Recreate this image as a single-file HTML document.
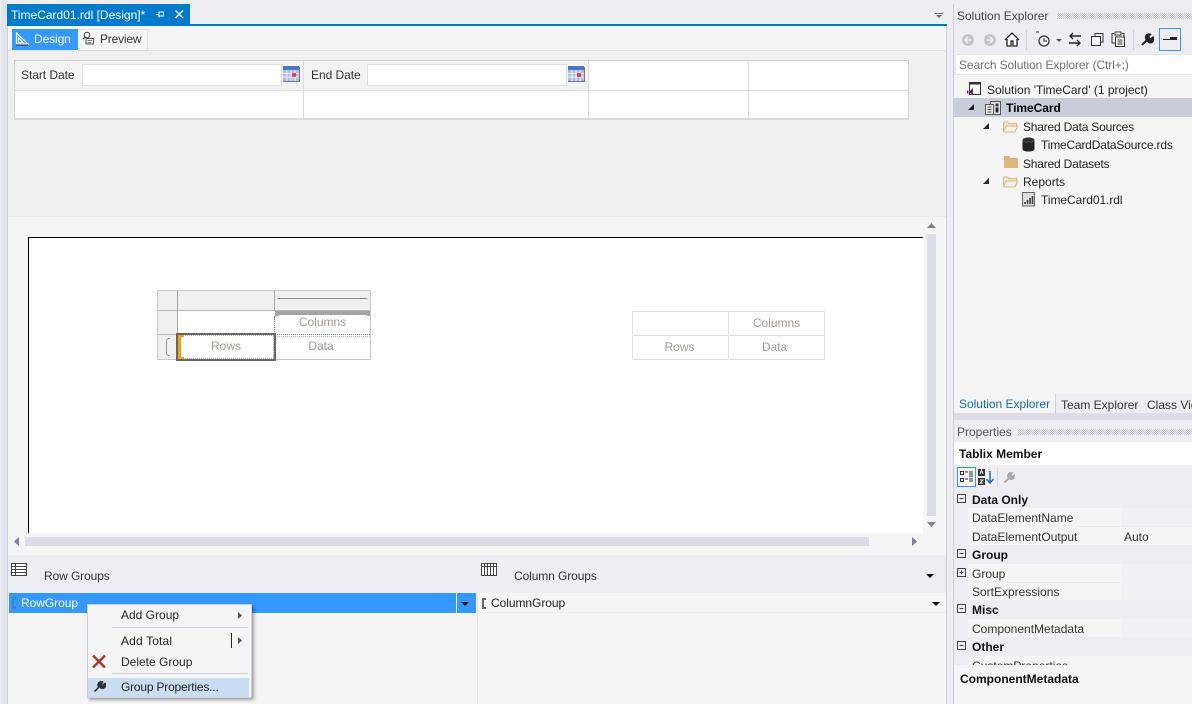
<!DOCTYPE html>
<html><head><meta charset="utf-8"><title>TimeCard</title>
<style>
html,body{margin:0;padding:0}
body{width:1192px;height:704px;overflow:hidden;position:relative;background:#eeeef2;font-family:"Liberation Sans",sans-serif;font-size:12px;color:#1e1e1e}
div,span,svg{position:absolute;box-sizing:border-box}
.t{white-space:nowrap;line-height:16px}
.g{color:#a09a94;text-align:center;white-space:nowrap;line-height:16px}
.b{font-weight:bold;color:#000}
.dots{background-image:conic-gradient(#c2c4d0 25%,transparent 0 50%,#c2c4d0 0 75%,transparent 0);background-size:2px 2px;height:6px}
</style></head><body>
<!-- doc frame -->
<div style="left:1px;top:0;width:6px;height:704px;background:#e3e3ee"></div>
<div style="left:7px;top:25px;width:940px;height:679px;background:#f5f5f5;border-left:1px solid #cccedb;border-right:1px solid #cccedb"></div>
<div style="left:7px;top:0;width:940px;height:25px;background:#eeeef2"></div>
<div style="left:7px;top:4px;width:183px;height:20px;background:#007acc"></div>
<div style="left:7px;top:24px;width:940px;height:2px;background:#007acc"></div>
<div class="t" style="left:11px;top:7px;color:#fff;font-size:12px">TimeCard01.rdl [Design]*</div>
<svg style="left:155px;top:9px" width="11" height="11" viewBox="0 0 11 11"><path d="M1 5.500h3M4 2.500v6M4.500 3h4v4h-4M8.500 2.500v5" stroke="#fff" fill="none"/></svg>
<svg style="left:174px;top:9px" width="11" height="11" viewBox="0 0 11 11"><path d="M1.500 1.500l7.500 7.500M9 1.500l-7.500 7.500" stroke="#fff" stroke-width="1.400" fill="none"/></svg>
<svg style="left:935px;top:13px" width="10" height="6"><path d="M0 0h8v1H0zM1 2h6L4 5z" fill="#6d6d75"/></svg>
<!-- design/preview tabs -->
<div style="left:8px;top:50px;width:938px;height:1px;background:#e2e2e8"></div>
<div style="left:78px;top:29px;width:70px;height:22px;background:#f6f6f6;border:1px solid #e0e0e6;border-left:0;border-bottom:1px solid #d8d8de"></div>
<div style="left:12px;top:29px;width:66px;height:21px;background:#3399ff"></div>
<svg style="left:15px;top:32px" width="14" height="14" viewBox="0 0 14 14"><path d="M1.500 1v11H13zM3.500 6v4.500H8z" fill="none" stroke="#fff" stroke-width="1.200"/><path d="M1 13h12" stroke="#222"/></svg>
<div class="t" style="left:34px;top:31px;color:#fff;letter-spacing:-.1px">Design</div>
<svg style="left:82px;top:31px" width="13" height="14" viewBox="0 0 13 14"><circle cx="5" cy="4" r="2.800" fill="none" stroke="#444"/><path d="M4 7.500h7.500v5.500H4z" fill="#eee" stroke="#555"/><path d="M1 8l2-2" stroke="#444" stroke-width="1.400"/><path d="M5.500 9.500h4.500M5.500 11.500h4" stroke="#777"/></svg>
<div class="t" style="left:100px;top:31px;letter-spacing:-.2px;color:#333">Preview</div>
<!-- parameter pane -->
<div style="left:8px;top:51px;width:938px;height:165px;background:#f0f0f0"></div>
<div style="left:8px;top:216px;width:938px;height:1px;background:#ebebef"></div>
<div style="left:14px;top:60px;width:895px;height:60px;background:#fff;border:1px solid #d2d2d2;border-bottom:2px solid #dcdcdc"></div>
<div style="left:15px;top:61px;width:573px;height:29px;background:#f3f3f3"></div>
<div style="left:15px;top:90px;width:893px;height:1px;background:#dcdcdc"></div>
<div style="left:303px;top:61px;width:1px;height:58px;background:#dcdcdc"></div>
<div style="left:588px;top:61px;width:1px;height:58px;background:#dcdcdc"></div>
<div style="left:748px;top:61px;width:1px;height:58px;background:#dcdcdc"></div>
<div class="t" style="left:21px;top:67px;color:#333;letter-spacing:-.05px">Start Date</div>
<div style="left:82px;top:64px;width:200px;height:22px;background:#fff;border:1px solid #e0e0e0"></div>
<div class="t" style="left:311px;top:67px;color:#333;letter-spacing:-.05px">End Date</div>
<div style="left:367px;top:64px;width:200px;height:22px;background:#fff;border:1px solid #e0e0e0"></div>
<svg style="left:283px;top:66px" width="17" height="16" viewBox="0 0 17 16"><rect width="16" height="15" fill="#a9bfe8"/><rect width="16" height="4" fill="#4a76c8"/><path d="M0 7.500h16M0 11h16M4 4v11M8 4v11M12 4v11" stroke="#fff" stroke-width=".8"/><rect x="9" y="7" width="4" height="4" fill="#f04050"/><path d="M16.500 1v14.500H0" stroke="#777" fill="none"/></svg>
<svg style="left:568px;top:66px" width="17" height="16" viewBox="0 0 17 16"><rect width="16" height="15" fill="#a9bfe8"/><rect width="16" height="4" fill="#4a76c8"/><path d="M0 7.500h16M0 11h16M4 4v11M8 4v11M12 4v11" stroke="#fff" stroke-width=".8"/><rect x="9" y="7" width="4" height="4" fill="#f04050"/><path d="M16.500 1v14.500H0" stroke="#777" fill="none"/></svg>
<!-- report surface -->
<div style="left:28px;top:237px;width:895px;height:296px;background:#fff;border-left:1px solid #000;border-top:1px solid #000"></div>
<!-- scrollbars -->
<div style="left:927px;top:234px;width:9px;height:282px;background:#dcdce6"></div>
<svg style="left:927px;top:223px" width="9" height="6"><path d="M4.500 0L9 5H0z" fill="#7c7f96"/></svg>
<svg style="left:927px;top:522px" width="9" height="6"><path d="M0 0h9L4.500 5z" fill="#7c7f96"/></svg>
<div style="left:25px;top:537px;width:844px;height:9px;background:#dcdce6"></div>
<svg style="left:912px;top:537px" width="6" height="9"><path d="M0 0l5 4.500L0 9z" fill="#7c7f96"/></svg>
<svg style="left:14px;top:537px" width="6" height="9"><path d="M5 0L0 4.500 5 9z" fill="#7c7f96"/></svg>
<!-- left tablix -->
<div style="left:157px;top:290px;width:214px;height:70px;background:#fff;border:1px solid #c8c8c8"></div>
<div style="left:158px;top:291px;width:212px;height:19px;background:#f0f0f0"></div>
<div style="left:158px;top:310px;width:19px;height:49px;background:#f0f0f0"></div>
<div style="left:158px;top:310px;width:212px;height:1px;background:#b4b4b4"></div>
<div style="left:177px;top:291px;width:1px;height:68px;background:#a8a8a8"></div>
<div style="left:274px;top:291px;width:1px;height:19px;background:#a8a8a8"></div>
<div style="left:158px;top:334px;width:19px;height:1px;background:#b4b4b4"></div>
<div style="left:277px;top:298px;width:91px;height:2px;border-top:1px solid #8f8f8f;border-radius:2px 2px 0 0"></div>
<div style="left:275px;top:311px;width:95px;height:5px;background:#a4a4a4"></div>
<div style="left:279px;top:315px;width:88px;height:2px;background:#fff"></div>
<div style="left:274px;top:316px;width:0;height:18px;border-left:1px dotted #777"></div>
<div style="left:275px;top:334px;width:95px;height:0;border-top:1px dotted #777"></div>
<div style="left:275px;top:336px;width:95px;height:0;border-top:1px dotted #bbb"></div>
<div class="g" style="left:275px;top:314px;width:95px">Columns</div>
<div class="g" style="left:275px;top:338px;width:92px;color:#999">Data</div>
<div style="left:176px;top:333px;width:100px;height:28px;border:2px solid #666"></div>
<div style="left:178px;top:335px;width:96px;height:24px;border:1px dotted #aaa;border-left:0"></div>
<div style="left:178px;top:335px;width:6px;height:24px;background:#f0a30a"></div>
<div style="left:181px;top:337px;width:3px;height:20px;background:#fff"></div>
<div class="g" style="left:178px;top:338px;width:96px">Rows</div>
<div style="left:166px;top:338px;width:4px;height:18px;border:1px solid #999;border-right:0;border-radius:3px 0 0 3px"></div>
<!-- right tablix -->
<div style="left:632px;top:311px;width:193px;height:49px;background:#fff;border:1px solid #e0e0e0"></div>
<div style="left:633px;top:335px;width:191px;height:1px;background:#e0e0e0"></div>
<div style="left:728px;top:312px;width:1px;height:47px;background:#e0e0e0"></div>
<div class="g" style="left:729px;top:315px;width:95px">Columns</div>
<div class="g" style="left:632px;top:339px;width:95px">Rows</div>
<div class="g" style="left:727px;top:339px;width:95px;color:#999">Data</div>
<!-- groups -->
<div style="left:8px;top:555px;width:938px;height:38px;background:#eeeef2"></div>
<svg style="left:11px;top:563px" width="16" height="13" viewBox="0 0 16 13"><rect x=".5" y=".5" width="15" height="12" fill="#fff" stroke="#444"/><path d="M0 3.500h16M0 6.500h16M0 9.500h16M4.500 0v13" stroke="#444"/></svg>
<div class="t" style="left:44px;top:568px;color:#333;letter-spacing:-.1px">Row Groups</div>
<svg style="left:481px;top:563px" width="16" height="13" viewBox="0 0 16 13"><rect x=".5" y=".5" width="15" height="12" fill="#fff" stroke="#444"/><path d="M0 3.500h16M3.500 0v13M6.500 0v13M9.500 0v13M12.500 0v13" stroke="#444"/></svg>
<div class="t" style="left:514px;top:568px;color:#333;letter-spacing:-.1px">Column Groups</div>
<svg style="left:926px;top:574px" width="9" height="5"><path d="M0 0h8L4 4z" fill="#111"/></svg>
<div style="left:9px;top:593px;width:467px;height:20px;background:#3399ff"></div>
<div style="left:456px;top:593px;width:1px;height:20px;background:#f5f5f5"></div>
<svg style="left:461px;top:602px" width="9" height="5"><path d="M0 0h8L4 4z" fill="#111"/></svg>
<div style="left:12px;top:597px;width:4px;height:12px;border:2px solid #4d80bd;border-right:0"></div>
<div class="t" style="left:21px;top:595px;color:#fff;letter-spacing:-.05px">RowGroup</div>
<div style="left:477px;top:593px;width:1px;height:111px;background:#e8e8ec"></div>
<div style="left:478px;top:593px;width:468px;height:20px;background:#f5f5f5;border-bottom:1px solid #ececf0"></div>
<div style="left:482px;top:598px;width:4px;height:11px;border:2px solid #666;border-right:0"></div>
<div class="t" style="left:491px;top:595px;color:#222;letter-spacing:-.05px">ColumnGroup</div>
<svg style="left:932px;top:602px" width="9" height="5"><path d="M0 0h8L4 4z" fill="#111"/></svg>
<!-- context menu -->
<div style="left:87px;top:604px;width:165px;height:94px;background:#f5f5f5;border:1px solid #cccedb;box-shadow:2px 2px 3px rgba(0,0,0,.35)"></div>
<div class="t" style="left:121px;top:607px;color:#222">Add Group</div>
<svg style="left:238px;top:612px" width="5" height="7"><path d="M0 0l4 3.500L0 7z" fill="#555"/></svg>
<div style="left:112px;top:627px;width:136px;height:1px;background:#cccedb"></div>
<div class="t" style="left:121px;top:633px;color:#222;letter-spacing:.15px">Add Total</div>
<div style="left:231px;top:633px;width:1px;height:15px;background:#222"></div>
<svg style="left:238px;top:637px" width="5" height="7"><path d="M0 0l4 3.500L0 7z" fill="#555"/></svg>
<svg style="left:92px;top:655px" width="14" height="13" viewBox="0 0 14 13"><path d="M1 .5l12 12M13 .5l-12 12" stroke="#a8392c" stroke-width="2.400" fill="none"/></svg>
<div class="t" style="left:121px;top:654px;color:#222">Delete Group</div>
<div style="left:112px;top:673px;width:136px;height:1px;background:#cccedb"></div>
<div style="left:88px;top:678px;width:161px;height:19px;background:#c9def5"></div>
<svg style="left:93px;top:680px" width="13" height="13" viewBox="0 0 13 13"><path d="M1.500 11.500L6 7M6 7a3 3 0 0 1 3-5l1-.5-2 2.500 1.500 1.500 2.500-2a3 3 0 0 1-5 3.500" fill="#333" stroke="#333" stroke-width="1.600"/></svg>
<div class="t" style="left:121px;top:679px;color:#222;letter-spacing:-.2px">Group Properties...</div>
<!-- solution explorer -->
<div style="left:953px;top:4px;width:239px;height:700px;background:#eeeef2;border-left:1px solid #cccedb"></div>
<div class="t" style="left:957px;top:8px;color:#444">Solution Explorer</div>
<div class="dots" style="left:1057px;top:13px;width:135px"></div>
<svg style="left:961px;top:33px" width="46" height="14"><circle cx="7" cy="7" r="6" fill="#c6c6cc"/><path d="M10 7H4M7 4L4 7l3 3" stroke="#eeeef2" fill="none" stroke-width="1.500"/><circle cx="29" cy="7" r="6" fill="#c6c6cc"/><path d="M26 7h6M29 4l3 3-3 3" stroke="#eeeef2" fill="none" stroke-width="1.500"/></svg>
<svg style="left:1004px;top:32px" width="16" height="15" viewBox="0 0 16 15"><path d="M1 8l7-7 7 7M3 7v7h4V9h2v5h4V7" fill="#fff" stroke="#222" stroke-width="1.300"/></svg>
<div style="left:1026px;top:30px;width:1px;height:20px;background:#d4d4da"></div>
<svg style="left:1036px;top:31px" width="26" height="17" viewBox="0 0 26 17"><circle cx="8" cy="10" r="5" fill="none" stroke="#333" stroke-width="1.300"/><path d="M8 7v3h3M0 1h3" stroke="#333" fill="none"/><path d="M20 8h6l-3 3z" fill="#555"/></svg>
<svg style="left:1068px;top:32px" width="14" height="15" viewBox="0 0 14 15"><path d="M13 4H2M5 1L2 4l3 3M1 11h11M9 8l3 3-3 3" stroke="#222" stroke-width="1.400" fill="none"/></svg>
<svg style="left:1091px;top:33px" width="13" height="13" viewBox="0 0 13 13"><path d="M4 3V.5h8V9H9.500" fill="none" stroke="#333"/><rect x=".5" y="3.500" width="9" height="9" fill="#fff" stroke="#333"/></svg>
<svg style="left:1111px;top:31px" width="15" height="16" viewBox="0 0 15 16"><path d="M3 2.500H1V12h3" fill="none" stroke="#333"/><path d="M11 2.500h2V6" fill="none" stroke="#333"/><rect x="4" y="1" width="6" height="3" fill="#fff" stroke="#333"/><rect x="4.500" y="6" width="9" height="9.500" fill="#fff" stroke="#333"/><path d="M6.500 9h5M6.500 11h5M6.500 13h5" stroke="#333"/></svg>
<div style="left:1133px;top:30px;width:1px;height:20px;background:#d4d4da"></div>
<svg style="left:1140px;top:33px" width="14" height="14" viewBox="0 0 14 14"><path d="M2 12L7 7M7 7a3.200 3.200 0 0 1 3-5.500l-2 2.500 2.500 2.500 2.500-2A3.200 3.200 0 0 1 7.500 8" fill="#222" stroke="#222" stroke-width="2"/></svg>
<div style="left:1159px;top:28px;width:22px;height:23px;border:1px solid #3399ff;background:#eeeef2"></div>
<div style="left:1163px;top:39px;width:14px;height:1px;background:#222"></div>
<div style="left:1170px;top:37px;width:7px;height:3px;background:#222"></div>
<div style="left:955px;top:54px;width:237px;height:21px;background:#fff;border:1px solid #e4e4ea;border-right:0"></div>
<div class="t" style="left:959px;top:57px;color:#707070;letter-spacing:-.1px">Search Solution Explorer (Ctrl+;)</div>
<!-- tree -->
<div style="left:954px;top:75px;width:238px;height:319px;background:#f5f5f5"></div>
<div style="left:954px;top:98px;width:238px;height:19px;background:#c9ccd9"></div>
<svg style="left:967px;top:82px" width="14" height="14" viewBox="0 0 14 14"><rect x="2.500" y=".5" width="11" height="12" fill="#fff" stroke="#333"/><rect x="2" y="0" width="12" height="2.500" fill="#333"/><path d="M0 8l2 2 4-4v7l-4-3-2 2z" fill="#68217a"/></svg>
<div class="t" style="left:987px;top:82px;color:#222">Solution 'TimeCard' (1 project)</div>
<svg style="left:968px;top:104px" width="7" height="7"><path d="M6 0v6H0z" fill="#222"/></svg>
<svg style="left:985px;top:100px" width="16" height="16" viewBox="0 0 16 16"><rect x="5.500" y="1.500" width="10" height="13" fill="#ddd" stroke="#555"/><rect x=".5" y="4.500" width="8" height="10" fill="#eee" stroke="#555"/><path d="M2.500 7h4M2.500 9.500h4M2.500 12h4M11 4h2v2h-2zM11 8h2v4h-2z" stroke="#444"/></svg>
<div class="t b" style="left:1006px;top:100px;letter-spacing:-.05px">TimeCard</div>
<svg style="left:983px;top:123px" width="7" height="7"><path d="M6 0v6H0z" fill="#222"/></svg>
<svg style="left:1003px;top:120px" width="15" height="13" viewBox="0 0 15 13"><path d="M.5 12V2h4l1 1.500h8V6" fill="#f4e8d0" stroke="#dcb67a"/><path d="M.5 12L3 6h11.500L12 12z" fill="#f5f5f5" stroke="#dcb67a"/></svg>
<div class="t" style="left:1023px;top:119px;color:#222;letter-spacing:-.2px">Shared Data Sources</div>
<svg style="left:1022px;top:137px" width="13" height="15" viewBox="0 0 13 15"><ellipse cx="6.500" cy="3" rx="6" ry="2.500" fill="#333"/><path d="M.5 3v9c0 1.500 2.500 2.500 6 2.500s6-1 6-2.500V3c0 1.500-2.500 2.500-6 2.500S.5 4.500.5 3z" fill="#222"/></svg>
<div class="t" style="left:1041px;top:137px;color:#222;letter-spacing:-.18px">TimeCardDataSource.rds</div>
<svg style="left:1004px;top:156px" width="14" height="12" viewBox="0 0 14 12"><path d="M0 12V0h5l1.500 2H14v10z" fill="#dcb67a"/></svg>
<div class="t" style="left:1023px;top:155.500px;color:#222;letter-spacing:-.2px">Shared Datasets</div>
<svg style="left:983px;top:178px" width="7" height="7"><path d="M6 0v6H0z" fill="#222"/></svg>
<svg style="left:1003px;top:175px" width="15" height="13" viewBox="0 0 15 13"><path d="M.5 12V2h4l1 1.500h8V6" fill="#f4e8d0" stroke="#dcb67a"/><path d="M.5 12L3 6h11.500L12 12z" fill="#f5f5f5" stroke="#dcb67a"/></svg>
<div class="t" style="left:1023px;top:174px;color:#222">Reports</div>
<svg style="left:1022px;top:192px" width="14" height="15" viewBox="0 0 14 15"><rect x=".5" y=".5" width="12" height="13.500" fill="#ddd" stroke="#666"/><path d="M3 12V10M5.500 12V8M8 12V6M10.500 12V4" stroke="#444" stroke-width="1.600"/></svg>
<div class="t" style="left:1041px;top:192px;color:#222;letter-spacing:-.05px">TimeCard01.rdl</div>
<!-- bottom tabs -->
<div style="left:954px;top:394px;width:238px;height:19px;background:#eeeef2"></div>
<div style="left:954px;top:394px;width:102px;height:19px;background:#f5f5f5;border-right:1px solid #cccedb"></div>
<div class="t" style="left:959px;top:396px;color:#0e70c0;letter-spacing:-.02px">Solution Explorer</div>
<div class="t" style="left:1061px;top:397px;color:#333">Team Explorer</div>
<div class="t" style="left:1147px;top:397px;color:#333">Class View</div>
<div style="left:954px;top:413px;width:238px;height:7px;background:#dcdde6"></div>
<!-- properties -->
<div class="t" style="left:957px;top:424px;color:#555">Properties</div>
<div class="dots" style="left:1018px;top:429px;width:174px"></div>
<div style="left:954px;top:442px;width:238px;height:23px;background:#fff"></div>
<div class="t b" style="left:959px;top:446px;color:#111">Tablix Member</div>
<div style="left:957px;top:467px;width:19px;height:20px;border:1px solid #3399ff;background:#f5f5f5"></div>
<svg style="left:960px;top:471px" width="13" height="12" viewBox="0 0 13 12"><path d="M.5.500h3v3h-3zM.5 7.500h3v3h-3z" fill="#fff" stroke="#333"/><path d="M5 1h3M5 8h3M9 1h4M9 3h4M9 5h4M9 8h4M9 10h4" stroke="#333"/></svg>
<svg style="left:978px;top:469px" width="16" height="17" viewBox="0 0 16 17"><rect x="0" y="0" width="7" height="7" fill="#333"/><rect x="0" y="9" width="7" height="7" fill="#333"/><path d="M2 5l1.500-4L5 5M2 11h3l-3 3h3" stroke="#fff" fill="none"/><path d="M12 2v11M8.500 10l3.500 4 3.500-4" stroke="#1c6fb5" fill="none" stroke-width="1.500"/></svg>
<div style="left:997px;top:468px;width:1px;height:19px;background:#d8d8de"></div>
<svg style="left:1003px;top:471px" width="13" height="13" viewBox="0 0 13 13"><path d="M1.500 11.500L6 7a3 3 0 0 1 3-5l-1.500 2L9 6l2-1.500A3 3 0 0 1 7 8" fill="#aaa" stroke="#aaa" stroke-width="1.800"/></svg>
<!-- prop grid -->
<div style="left:968px;top:508px;width:224px;height:157px;background:#f5f5f5"></div>
<div style="left:954px;top:545px;width:238px;height:19px;background:#eeeef2"></div>
<div style="left:954px;top:600px;width:238px;height:19px;background:#eeeef2"></div>
<div style="left:954px;top:637px;width:238px;height:19px;background:#eeeef2"></div>
<div style="left:968px;top:526px;width:224px;height:1px;background:#ececf0"></div>
<div style="left:968px;top:582px;width:224px;height:1px;background:#ececf0"></div>
<div style="left:1121px;top:508px;width:71px;height:18px;background:#f1f1f4"></div>
<div style="left:1121px;top:564px;width:71px;height:18px;background:#f1f1f4"></div>
<div style="left:1121px;top:582px;width:71px;height:18px;background:#f1f1f4"></div>
<div style="left:1121px;top:619px;width:71px;height:18px;background:#f1f1f4"></div>
<svg style="left:956px;top:494px" width="11" height="170"><g fill="none" stroke="#444"><path d="M1.500.5h8v8h-8zM3.500 4.500h4"/><path d="M1.500 55.500h8v8h-8zM3.500 59.500h4"/><path d="M1.500 74.500h8v8h-8zM3.500 78.500h4M5.500 76.500v4"/><path d="M1.500 110.500h8v8h-8zM3.500 114.500h4"/><path d="M1.500 147.500h8v8h-8zM3.500 151.500h4"/></g></svg>
<div class="t b" style="left:972px;top:492px;color:#111">Data Only</div>
<div class="t" style="left:972px;top:510px;color:#333">DataElementName</div>
<div class="t" style="left:972px;top:529px;color:#333">DataElementOutput</div>
<div class="t" style="left:1124px;top:529px;color:#333">Auto</div>
<div class="t b" style="left:972px;top:547px;color:#111">Group</div>
<div class="t" style="left:972px;top:566px;color:#333">Group</div>
<div class="t" style="left:972px;top:584px;color:#333">SortExpressions</div>
<div class="t b" style="left:972px;top:602px;color:#111">Misc</div>
<div class="t" style="left:972px;top:621px;color:#333">ComponentMetadata</div>
<div class="t b" style="left:972px;top:639px;color:#111">Other</div>
<div class="t" style="left:972px;top:658px;color:#333">CustomProperties</div>
<div style="left:954px;top:665px;width:238px;height:39px;background:#f5f5f5"></div>
<div class="t b" style="left:960px;top:671px;color:#111">ComponentMetadata</div>
</body></html>
